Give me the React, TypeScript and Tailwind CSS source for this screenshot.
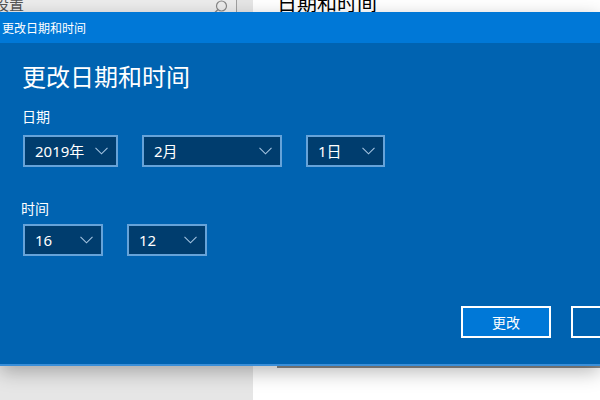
import React from "react";

const cjk = { fontFamily: '"Noto Sans CJK SC", "Noto Sans", sans-serif' };
const ui = { fontFamily: '"Noto Sans", "Noto Sans CJK SC", sans-serif' };

function Chevron() {
  return (
    <svg width="13" height="8" viewBox="0 0 13 8" className="shrink-0">
      <path d="M0.5 0.8 L6.5 6.8 L12.5 0.8" fill="none" stroke="#a3c3e0" strokeWidth="1.1" />
    </svg>
  );
}

function Select({ label, w }: { label: string; w: string }) {
  return (
    <div
      className={`${w} h-[32px] border-2 border-[#66a3d9] bg-[#003d6e] flex items-center justify-between pl-[10px] pr-[8px] text-white text-[15px]`}
      style={ui}
    >
      <span className="leading-none">{label}</span>
      <Chevron />
    </div>
  );
}

export default function App() {
  return (
    <div className="relative w-[600px] h-[400px] overflow-hidden bg-white">
      {/* background settings window */}
      <div className="flex h-full">
        <div className="w-[253px] h-full bg-[#e6e6e6] flex flex-col">
          <div className="h-[12px] w-[237px] border-r border-[#a0a0a0] bg-[#ececec] flex items-end justify-between overflow-hidden">
            <span className="text-[15px] leading-none -ml-[36px] text-[#555] mb-[1px]" style={cjk}>
              查找设置
            </span>
            <svg width="16" height="16" viewBox="0 0 16 16" className="mr-[8px] -mb-[4px]">
              <circle cx="9.5" cy="6" r="5" fill="none" stroke="#888" strokeWidth="1.2" />
              <path d="M6 9.5 L1.5 14" stroke="#888" strokeWidth="1.4" />
            </svg>
          </div>
        </div>
        <div className="flex-1 flex flex-col pl-[24px]">
          <div className="h-[12px] flex items-end overflow-hidden">
            <span className="text-[20px] leading-none text-black -mb-[1px]" style={cjk}>
              日期和时间
            </span>
          </div>
          <div className="mt-[300px] h-[56px] border-2 border-[#8a8a8a] -mr-[10px]" />
        </div>
      </div>

      {/* dialog */}
      <div
        className="absolute left-0 right-0 top-[12px] h-[354px] flex flex-col bg-[#0063b1] border-b-2 border-[#3a8fd9] shadow-[0_6px_18px_rgba(0,0,0,0.28)]"
        style={cjk}
      >
        <div className="h-[31px] bg-[#0078d7] flex items-center pl-[2px] text-white text-[12px]">
          更改日期和时间
        </div>
        <div className="flex flex-col pl-[22px] pt-[17px]">
          <div className="text-white text-[24px] leading-[32px]">更改日期和时间</div>
          <div className="text-white text-[14px] leading-[20px] mt-[14px]">日期</div>
          <div className="flex gap-[24px] mt-[9px] pl-[1px]">
            <Select label="2019年" w="w-[95px]" />
            <Select label="2月" w="w-[140px]" />
            <Select label="1日" w="w-[79px]" />
          </div>
          <div className="text-white text-[14px] leading-[20px] mt-[31px] -ml-[1px]">时间</div>
          <div className="flex gap-[24px] mt-[6px] pl-[1px]">
            <Select label="16" w="w-[80px]" />
            <Select label="12" w="w-[80px]" />
          </div>
          <div className="flex gap-[20px] mt-[50px] pl-[439px]">
            <div className="w-[90px] h-[32px] shrink-0 border-2 border-white bg-[#0078d7] flex items-center justify-center text-white text-[14px]">
              更改
            </div>
            <div className="w-[90px] h-[32px] shrink-0 border-2 border-white bg-[#0063b1] flex items-center justify-center text-white text-[14px]">
              取消
            </div>
          </div>
        </div>
      </div>
    </div>
  );
}
